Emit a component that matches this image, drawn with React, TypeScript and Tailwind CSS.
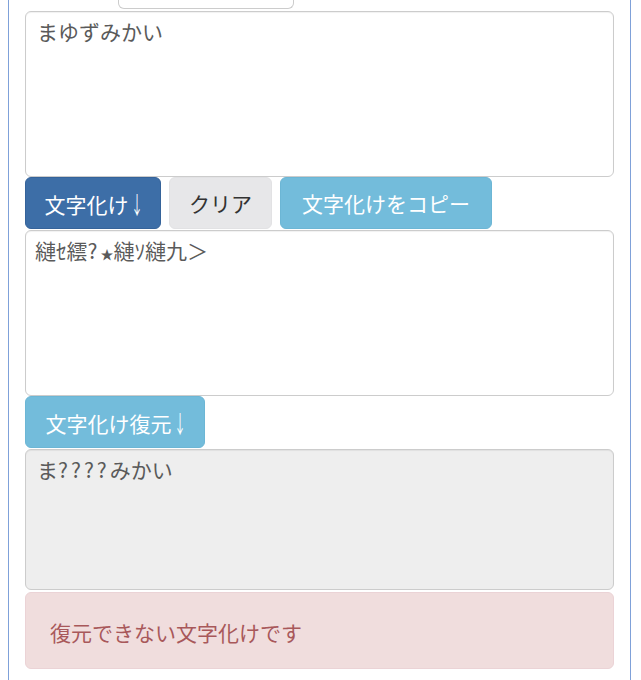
import React from "react";

const font = { fontFamily: '"Noto Sans CJK JP", "Noto Sans", sans-serif' };

function Arrow() {
  return (
    <span className="inline-block w-[13px] align-baseline">
      <span className="inline-block text-[24px] leading-[30px] scale-x-[0.5] origin-left relative top-[1px] ml-[2px]">↓</span>
    </span>
  );
}

function Q({ children }: { children: React.ReactNode }) {
  return <span className="tracking-[3px]">{children}</span>;
}

function Box({ children, h, bg }: { children?: React.ReactNode; h: string; bg: string }) {
  return (
    <div
      className={`w-full ${h} ${bg} border border-[#cccccc] rounded-[6px] px-[11px] pt-[4px] text-[21px] leading-[30px] text-[#5a5a5a] shadow-[inset_0_1px_1px_rgba(0,0,0,0.06)]`}
    >
      {children}
    </div>
  );
}

export default function App() {
  return (
    <div className="w-[641px] h-[680px] bg-white overflow-hidden" style={font}>
      <div className="ml-[8px] w-[623px] h-[680px] border-x border-[#7fa1d9] pl-[16px] pr-[16px]">
        <div className="ml-[93px] w-[176px] h-[9px] border-x border-b border-[#cccccc] rounded-b-[6px]" />
        <div className="mt-[2px]">
          <Box h="h-[166px]" bg="bg-white">まゆずみかい</Box>
        </div>
        <div className="flex gap-[8px] h-[53px]">
          <button className="h-[52px] w-[136px] rounded-[6px] bg-[#3d6ea7] border border-[#35639a] text-white text-[21px] leading-[30px]">
            文字化け<Arrow />
          </button>
          <button className="h-[52px] w-[103px] rounded-[6px] bg-[#e7e7e9] border border-[#e2e2e4] text-[#333333] text-[21px] leading-[30px]">
            クリア
          </button>
          <button className="h-[52px] w-[212px] rounded-[6px] bg-[#73bcdb] border border-[#6cb6d5] text-white text-[21px] leading-[30px]">
            文字化けをコピー
          </button>
        </div>
        <Box h="h-[166px]" bg="bg-white">
          <span className="-ml-[2px]">縺ｾ繧<Q>?</Q><span className="text-[13px]">★</span>縺ｿ縺九＞</span>
        </Box>
        <div className="h-[53px]">
          <button className="h-[52px] w-[180px] rounded-[6px] bg-[#73bcdb] border border-[#6cb6d5] text-white text-[21px] leading-[30px]">
            文字化け復元<Arrow />
          </button>
        </div>
        <Box h="h-[141px]" bg="bg-[#eeeeee]">ま<Q>????</Q>みかい</Box>
        <div className="mt-[2px] h-[77px] rounded-[6px] bg-[#f0dddd] border border-[#ebd3d6] flex items-center pl-[24px] pt-[4px] text-[21px] text-[#a8585a]">
          復元できない文字化けです
        </div>
      </div>
    </div>
  );
}
